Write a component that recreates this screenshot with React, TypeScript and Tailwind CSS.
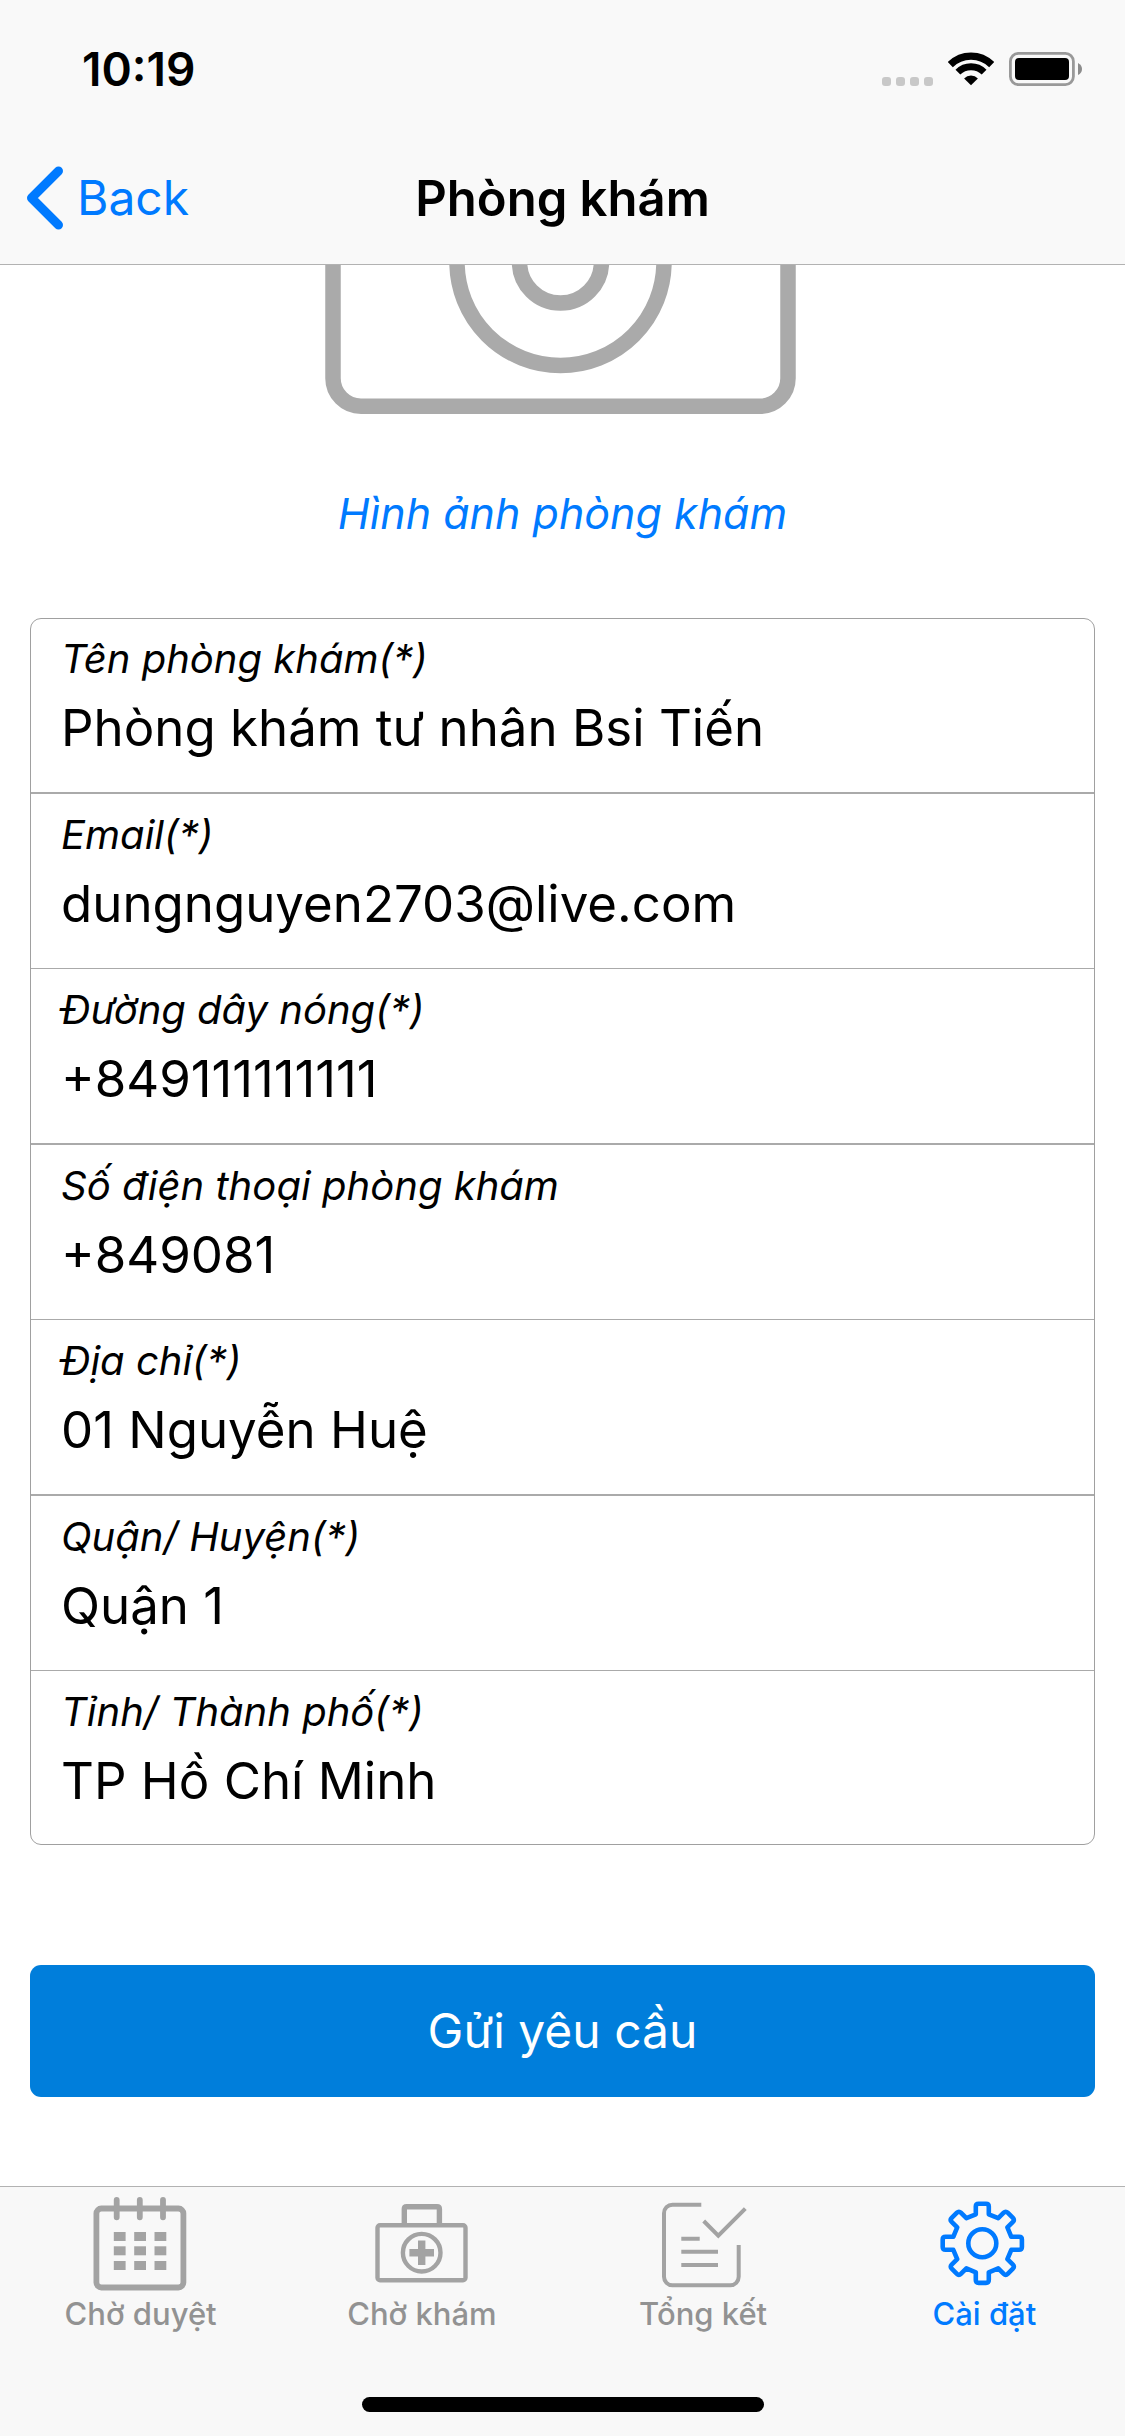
import type { ReactNode } from "react";

type Field = { id: string; label: string; value: string; type: string };

const fields: Field[] = [
  { id: "name", label: "Tên phòng khám(*)", value: "Phòng khám tư nhân Bsi Tiến", type: "text" },
  { id: "email", label: "Email(*)", value: "dungnguyen2703@live.com", type: "email" },
  { id: "hotline", label: "Đường dây nóng(*)", value: "+849111111111", type: "tel" },
  { id: "phone", label: "Số điện thoại phòng khám", value: "+849081", type: "tel" },
  { id: "address", label: "Địa chỉ(*)", value: "01 Nguyễn Huệ", type: "text" },
  { id: "district", label: "Quận/ Huyện(*)", value: "Quận 1", type: "text" },
  { id: "city", label: "Tỉnh/ Thành phố(*)", value: "TP Hồ Chí Minh", type: "text" },
];

function SignalDots() {
  return (
    <span className="flex gap-[5px] self-end" aria-hidden="true">
      {[0, 1, 2, 3].map((dot) => (
        <span key={dot} className="size-[9px] rounded-[3px] bg-[#c8c8c8]" />
      ))}
    </span>
  );
}

function WifiIcon() {
  return (
    <svg width="46" height="34" viewBox="0 0 46 34" fill="none" aria-hidden="true">
      <path d="M2.3 12.6A29.3 29.3 0 0 1 43.7 12.6" stroke="#000" strokeWidth="7.2" />
      <path d="M9.9 20.2A18.5 18.5 0 0 1 36.1 20.2" stroke="#000" strokeWidth="6.8" />
      <path d="M23 33.3L16.1 26.4A9.8 9.8 0 0 1 29.9 26.4Z" fill="#000" />
    </svg>
  );
}

function BatteryIcon() {
  return (
    <svg width="73" height="34" viewBox="0 0 73 34" fill="none" aria-hidden="true">
      <rect x="1.4" y="1.4" width="63" height="31.2" rx="8" stroke="#999" strokeWidth="2.8" />
      <rect x="6" y="6" width="54" height="22" rx="4" fill="#000" />
      <path d="M69 11Q73 13 73 17T69 23Z" fill="#8c8c8c" />
    </svg>
  );
}

function CameraPicture() {
  return (
    <svg className="h-[150px] w-[476px]" viewBox="325 265 476 150" fill="none" stroke="#aaa" strokeWidth="15.5" role="img" aria-label="Hình ảnh phòng khám">
      <rect x="333" y="120" width="455" height="286.3" rx="28" />
      <circle cx="560.5" cy="262" r="103.5" />
      <circle cx="560.5" cy="262" r="41" />
    </svg>
  );
}

function CalendarIcon() {
  return (
    <svg width="96" height="96" viewBox="0 0 96 96" fill="none" stroke="#a3a3a3" strokeWidth="5.8" aria-hidden="true">
      <rect x="3.4" y="12.5" width="87" height="79" rx="5" />
      <path d="M23.7 4V21.3M46.8 4V21.3M70 4V21.3" strokeLinecap="round" />
      <g fill="#a3a3a3" stroke="none">
        {[36, 50.3, 65].map((y) =>
          [20.8, 41.2, 61.5].map((x) => <rect key={`${x}-${y}`} x={x} y={y} width="11.8" height="9" />),
        )}
      </g>
    </svg>
  );
}

function MedicalBagIcon() {
  return (
    <svg width="96" height="96" viewBox="0 0 96 96" fill="none" stroke="#a3a3a3" strokeWidth="4.4" aria-hidden="true">
      <rect x="3.5" y="29.2" width="88" height="55" rx="2.5" />
      <path d="M30.3 28V13Q30.3 10.7 32.6 10.7H63Q65.4 10.7 65.4 13V28" strokeWidth="5.4" />
      <circle cx="47.7" cy="56.7" r="18.8" />
      <path d="M35.4 56.7H60M47.7 44.4V69" strokeWidth="7.4" />
    </svg>
  );
}

function SummaryIcon() {
  return (
    <svg width="96" height="96" viewBox="0 0 96 96" fill="none" stroke="#a3a3a3" strokeWidth="4" aria-hidden="true">
      <path d="M46.3 8.7H17.5A8.5 8.5 0 0 0 9 17.2V80.8A8.5 8.5 0 0 0 17.5 89.3H75.2A8.5 8.5 0 0 0 83.7 80.8V49" />
      <path d="M48.7 25L63.3 39.6L90.3 12.6" />
      <path d="M26.3 42.7H44.7M26.3 55.7H63M26.3 69H63" />
    </svg>
  );
}

function GearIcon() {
  const at = (x: number, y: number, tooth: number) => {
    const a = (tooth * Math.PI) / 4;
    const px = 46.3 + x * Math.cos(a) - y * Math.sin(a);
    const py = 47.3 + x * Math.sin(a) + y * Math.cos(a);
    return `${px.toFixed(2)} ${py.toFixed(2)}`;
  };
  const outline = [0, 1, 2, 3, 4, 5, 6, 7]
    .map(
      (k) =>
        `${k === 0 ? "M" : "L"}${at(-6.5, -29, k)}L${at(-6.5, -36.8, k)}Q${at(-6.5, -39.6, k)} ${at(-3.7, -39.6, k)}` +
        `L${at(3.7, -39.6, k)}Q${at(6.5, -39.6, k)} ${at(6.5, -36.8, k)}L${at(6.5, -29, k)}`,
    )
    .join("");
  return (
    <svg width="96" height="96" viewBox="0 0 96 96" fill="none" stroke="#007aff" strokeWidth="4.6" strokeLinejoin="round" aria-hidden="true">
      <path d={`${outline}Z`} />
      <circle cx="46.3" cy="47.3" r="14" />
    </svg>
  );
}

function Tab({ label, icon, active = false }: { label: string; icon: ReactNode; active?: boolean }) {
  return (
    <a
      href="#"
      aria-current={active ? "page" : undefined}
      className={`flex flex-1 flex-col items-center pt-[9px] text-[31px] leading-[44px] font-medium ${active ? "text-[#007aff]" : "text-[#929292]"}`}
    >
      {icon}
      {label}
    </a>
  );
}

function rowStyle(index: number) {
  if (index === fields.length - 1) return "pt-[16px] pb-[21px]";
  if (index === 0) return "border-b-2 pt-[15px] pb-[22px]";
  return index % 2 === 0 ? "border-b-2 pt-[16px] pb-[22px]" : "border-b pt-[16px] pb-[22px]";
}

export default function App() {
  return (
    <div className="flex min-h-screen flex-col bg-white font-['Inter','Noto_Sans',sans-serif] text-black">
      <header className="border-b border-[#b2b2b2] bg-[#f9f9f9]">
        <div className="flex h-[132px] items-center justify-between pt-[6px] pr-[43px] pl-[82px]">
          <time className="text-[46px] leading-none font-semibold">10:19</time>
          <div className="flex items-center gap-[15px]">
            <SignalDots />
            <WifiIcon />
            <BatteryIcon />
          </div>
        </div>
        <nav className="grid h-[132px] grid-cols-[1fr_auto_1fr] items-center px-[26px]">
          <a href="#" className="flex items-center gap-[13px] text-[48px] leading-none text-[#007aff]">
            <svg width="38" height="64" viewBox="0 0 38 64" fill="none" stroke="#007aff" strokeWidth="9" strokeLinecap="round" strokeLinejoin="round" aria-hidden="true">
              <path d="M32.5 5L5.5 32L32.5 59" />
            </svg>
            Back
          </a>
          <h1 className="text-[49px] leading-none font-semibold">Phòng khám</h1>
        </nav>
      </header>

      <main className="flex flex-1 flex-col px-[30px]">
        <div className="flex flex-col items-center">
          <CameraPicture />
          <button type="button" className="mt-[68px] text-[43px] leading-[60px] text-[#007aff] italic">
            Hình ảnh phòng khám
          </button>
        </div>

        <form className="mt-[75px]" onSubmit={(event) => event.preventDefault()}>
          <div className="rounded-[11px] border border-[#a0a0a0]">
            {fields.map((field, index) => (
              <div key={field.id} className={`flex flex-col border-[#aaa] px-[30px] ${rowStyle(index)}`}>
                <label htmlFor={field.id} className="text-[40px] leading-[50px] italic">
                  {field.label}
                </label>
                <input
                  id={field.id}
                  type={field.type}
                  defaultValue={field.value}
                  className="h-[86px] w-full bg-transparent text-[51px] outline-none"
                />
              </div>
            ))}
          </div>
          <button type="submit" className="mt-[120px] h-[132px] w-full rounded-[11px] bg-[#007edb] text-[48px] text-white">
            Gửi yêu cầu
          </button>
        </form>
      </main>

      <footer className="border-t border-[#b2b2b2] bg-[#f8f8f8]">
        <nav className="flex h-[210px]">
          <Tab label="Chờ duyệt" icon={<CalendarIcon />} />
          <Tab label="Chờ khám" icon={<MedicalBagIcon />} />
          <Tab label="Tổng kết" icon={<SummaryIcon />} />
          <Tab label="Cài đặt" icon={<GearIcon />} active />
        </nav>
        <div className="mx-auto mb-[24px] h-[15px] w-[402px] rounded-full bg-black" />
      </footer>
    </div>
  );
}
